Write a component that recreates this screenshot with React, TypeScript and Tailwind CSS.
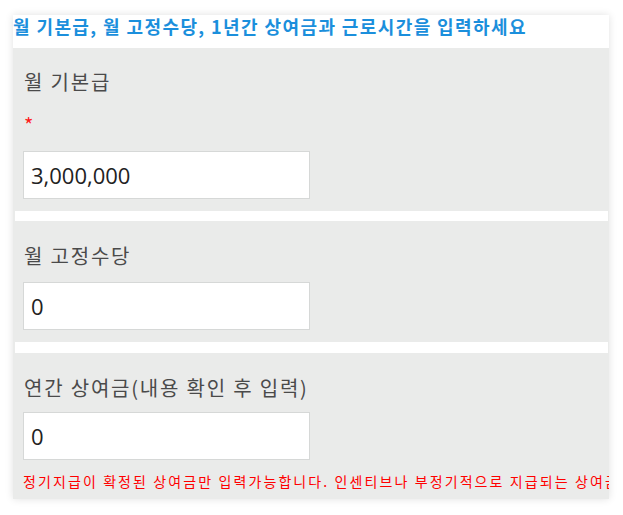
import React from "react";

const font = { fontFamily: '"Noto Sans CJK KR", "Noto Sans", sans-serif' };

function Field({ label, value, star, note, top, labelGap }: { label: string; value: string; star?: boolean; note?: boolean; top: string; labelGap: string }) {
  return (
    <div className={`bg-[#eaebea] px-[10px] ${top}`}>
      <div className="text-[20px] leading-[24px] tracking-[1.8px] text-[#4a4a4a] pl-[1px]">{label}</div>
      {star && <div className="text-[20px] leading-[20px] text-[#ff1a1a] mt-[21px] pl-[1px]">*</div>}
      <div className={`${labelGap} w-[287px] h-[48px] bg-white border border-[#d6d8d7] flex items-center px-[7px]`}>
        <span className="text-[22px] text-[#222]" style={{ fontFamily: '"Open Sans", "Noto Sans", sans-serif' }}>{value}</span>
      </div>
      {note ? (
        <div className="whitespace-nowrap text-[14px] leading-[18px] tracking-[2.1px] text-[#ff0000] mt-[12px] pb-[9px]">
          정기지급이 확정된 상여금만 입력가능합니다. 인센티브나 부정기적으로 지급되는 상여금은 입력하지 마세요.
        </div>
      ) : (
        <div className="h-[12px]" />
      )}
    </div>
  );
}

export default function App() {
  return (
    <div className="w-[623px] h-[515px] bg-white pt-[15px] pl-[13px]" style={font}>
      <div className="w-[596px] bg-[#eaebea] overflow-hidden shadow-[0_0_8px_rgba(0,0,0,0.12)]">
        <div className="bg-white h-[33px] flex items-start">
          <div className="whitespace-nowrap text-[18px] leading-[22px] tracking-[1.4px] font-bold text-[#1b8fdc]">
            월 기본급, 월 고정수당, 1년간 상여금과 근로시간을 입력하세요
          </div>
        </div>
        <Field label="월 기본급" value="3,000,000" star top="pt-[22px]" labelGap="mt-[16px]" />
        <div className="h-[10px] bg-white ml-[2px] mr-[1px]" />
        <Field label="월 고정수당" value="0" top="pt-[23px]" labelGap="mt-[14px]" />
        <div className="h-[11px] bg-white ml-[2px] mr-[1px]" />
        <Field label="연간 상여금(내용 확인 후 입력)" value="0" note top="pt-[23px]" labelGap="mt-[12px]" />
      </div>
    </div>
  );
}
